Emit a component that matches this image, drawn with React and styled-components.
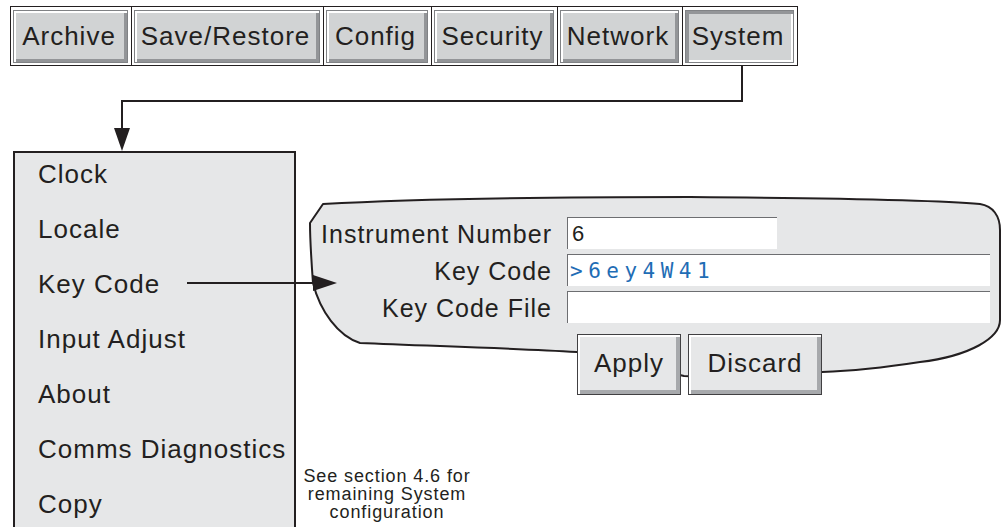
import React from "react";
import styled, { createGlobalStyle, css } from "styled-components";

const Global = createGlobalStyle`
  html, body { margin: 0; padding: 0; background: #ffffff; }
  body { font-family: "Liberation Sans", Arial, Helvetica, sans-serif; color: #231f20; }
`;

const INK = "#231f20";

const Page = styled.div`
  position: relative;
  width: 1002px;
  height: 527px;
  overflow: hidden;
  background: #fff;
`;

const TabBar = styled.div`
  display: flex;
  margin: 6px 0 0 10px;
  width: 788px;
  height: 60px;
  box-sizing: border-box;
  border: 1px solid ${INK};
  background: #fff;
`;

const TabCell = styled.div`
  flex: none;
  width: ${(p) => p.$w}px;
  box-sizing: border-box;
  padding: 3px 3px 2px 2px;
  border-right: ${(p) => (p.$last ? "none" : `1px solid ${INK}`)};
  display: flex;
`;

const TabButton = styled.div`
  flex: 1;
  display: flex;
  align-items: center;
  justify-content: center;
  padding-right: 3px;
  background: #d1d3d4;
  font-size: 26px;
  letter-spacing: 1px;
  color: ${INK};
  box-sizing: border-box;
  border: 1px solid #808285;
  ${(p) =>
    p.$selected
      ? css`
          box-shadow: inset 3px 3px 0 #939598, inset -2px -2px 0 #ffffff;
        `
      : css`
          box-shadow: inset 2px 2px 0 #ffffff, inset -3px -3px 0 #939598;
        `}
`;

const Connector = styled.svg`
  display: block;
  width: 1002px;
  height: 85px;
`;

const Main = styled.div`
  position: relative;
  display: flex;
  align-items: flex-start;
  padding-left: 13px;
`;

const Menu = styled.div`
  flex: none;
  width: 283px;
  height: 390px;
  box-sizing: border-box;
  border: 2px solid ${INK};
  border-bottom: none;
  background: #e6e7e8;
  display: flex;
  flex-direction: column;
  gap: 13px;
  padding-left: 23px;
`;

const MenuItem = styled.div`
  font-size: 26px;
  letter-spacing: 1px;
  line-height: 42px;
  height: 42px;
  color: ${INK};
  white-space: nowrap;
`;

const RightColumn = styled.div`
  flex: none;
  display: flex;
  flex-direction: column;
`;

const Bubble = styled.div`
  position: relative;
  margin: 45px 0 0 12px;
  width: 692px;
  height: 199px;
  box-sizing: border-box;
  padding: 21px 0 0 10px;
`;

const BubbleShape = styled.svg`
  position: absolute;
  left: 0;
  top: 0;
  width: 692px;
  height: 199px;
  overflow: visible;
`;

const FormGrid = styled.div`
  position: relative;
  display: grid;
  grid-template-columns: 234px 423px;
  grid-auto-rows: auto;
  column-gap: 15px;
  row-gap: 5px;
`;

const Label = styled.div`
  font-size: 25px;
  letter-spacing: 1px;
  line-height: 32px;
  height: 32px;
  padding-top: 1px;
  box-sizing: border-box;
  text-align: right;
  white-space: nowrap;
  color: ${INK};
`;

const Field = styled.div`
  width: ${(p) => p.$w}px;
  height: 32px;
  box-sizing: border-box;
  background: #ffffff;
  border-top: 1px solid #6d6e71;
  border-left: 1px solid #6d6e71;
  padding-left: 4px;
  display: flex;
  align-items: center;
  font-size: 22px;
  color: ${INK};
`;

const CodeValue = styled.span`
  font-family: "DejaVu Sans Mono", "Liberation Mono", monospace;
  font-size: 21px;
  letter-spacing: 5.5px;
  color: #1f6db5;
  margin-left: -2px;
`;

const ButtonRow = styled.div`
  grid-column: 2;
  display: flex;
  gap: 7px;
  padding-left: 10px;
  margin-top: 6px;
`;

const ActionButton = styled.div`
  width: ${(p) => p.$w}px;
  height: 61px;
  box-sizing: border-box;
  border: 1px solid #414042;
  background: #e6e7e8;
  box-shadow: inset 2px 2px 0 #ffffff, inset -4px -4px 0 #a7a9ac;
  display: flex;
  align-items: center;
  justify-content: center;
  padding-bottom: 2px;
  font-size: 26px;
  letter-spacing: 1px;
  color: ${INK};
`;

const Note = styled.div`
  width: 182px;
  margin-top: 72px;
  display: flex;
  flex-direction: column;
  align-items: center;
`;

const NoteLine = styled.span`
  display: block;
  font-size: 18px;
  letter-spacing: 0.9px;
  line-height: 18px;
  height: 18px;
  white-space: nowrap;
  color: ${INK};
`;

const KeyArrow = styled.svg`
  position: absolute;
  left: 0;
  top: 0;
  width: 340px;
  height: 150px;
  pointer-events: none;
`;

const tabs = [
  { label: "Archive", w: 121 },
  { label: "Save/Restore", w: 192 },
  { label: "Config", w: 108 },
  { label: "Security", w: 126 },
  { label: "Network", w: 125 },
  { label: "System", w: 114, selected: true },
];

const menuItems = [
  "Clock",
  "Locale",
  "Key Code",
  "Input Adjust",
  "About",
  "Comms Diagnostics",
  "Copy",
];

export default function App() {
  return (
    <>
      <Global />
      <Page>
        <TabBar>
          {tabs.map((t, i) => (
            <TabCell key={t.label} $w={t.w} $last={i === tabs.length - 1}>
              <TabButton $selected={t.selected}>{t.label}</TabButton>
            </TabCell>
          ))}
        </TabBar>

        <Connector viewBox="0 0 1002 85">
          <polyline
            points="742,0 742,35 122,35 122,64"
            fill="none"
            stroke={INK}
            strokeWidth="2"
          />
          <polygon points="114,62 130,62 122,85" fill={INK} />
        </Connector>

        <Main>
          <Menu>
            {menuItems.map((m) => (
              <MenuItem key={m}>{m}</MenuItem>
            ))}
          </Menu>

          <RightColumn>
            <Bubble>
              <BubbleShape viewBox="0 0 692 199">
                <path
                  d="M 2,27 L 15,8 C 120,2 250,1 382,1 C 520,2 630,4 672,8 C 685,10 692,20 692,34 L 692,124 C 692,142 662,160 612,166 C 580,171 545,175 514,176 C 450,179 400,181 376,180 C 340,172 300,158 269,156 C 200,152 120,150 52,147 C 30,140 12,115 5,87 C 3,60 2,40 2,27 Z"
                  fill="#e6e7e8"
                  stroke={INK}
                  strokeWidth="2"
                  strokeLinejoin="round"
                />
              </BubbleShape>
              <FormGrid>
                <Label>Instrument Number</Label>
                <Field $w={210}>6</Field>
                <Label>Key Code</Label>
                <Field $w={423}>
                  <CodeValue>&gt;6ey4W41</CodeValue>
                </Field>
                <Label>Key Code File</Label>
                <Field $w={423} />
                <ButtonRow>
                  <ActionButton $w={104}>Apply</ActionButton>
                  <ActionButton $w={134}>Discard</ActionButton>
                </ButtonRow>
              </FormGrid>
            </Bubble>
            <Note>
              <NoteLine>See section 4.6 for</NoteLine>
              <NoteLine>remaining System</NoteLine>
              <NoteLine>configuration</NoteLine>
            </Note>
          </RightColumn>

          <KeyArrow viewBox="0 0 340 150">
            <line x1="187" y1="132" x2="316" y2="132" stroke={INK} strokeWidth="2" />
            <polygon points="313,124 337,132 313,140" fill={INK} />
          </KeyArrow>
        </Main>
      </Page>
    </>
  );
}
